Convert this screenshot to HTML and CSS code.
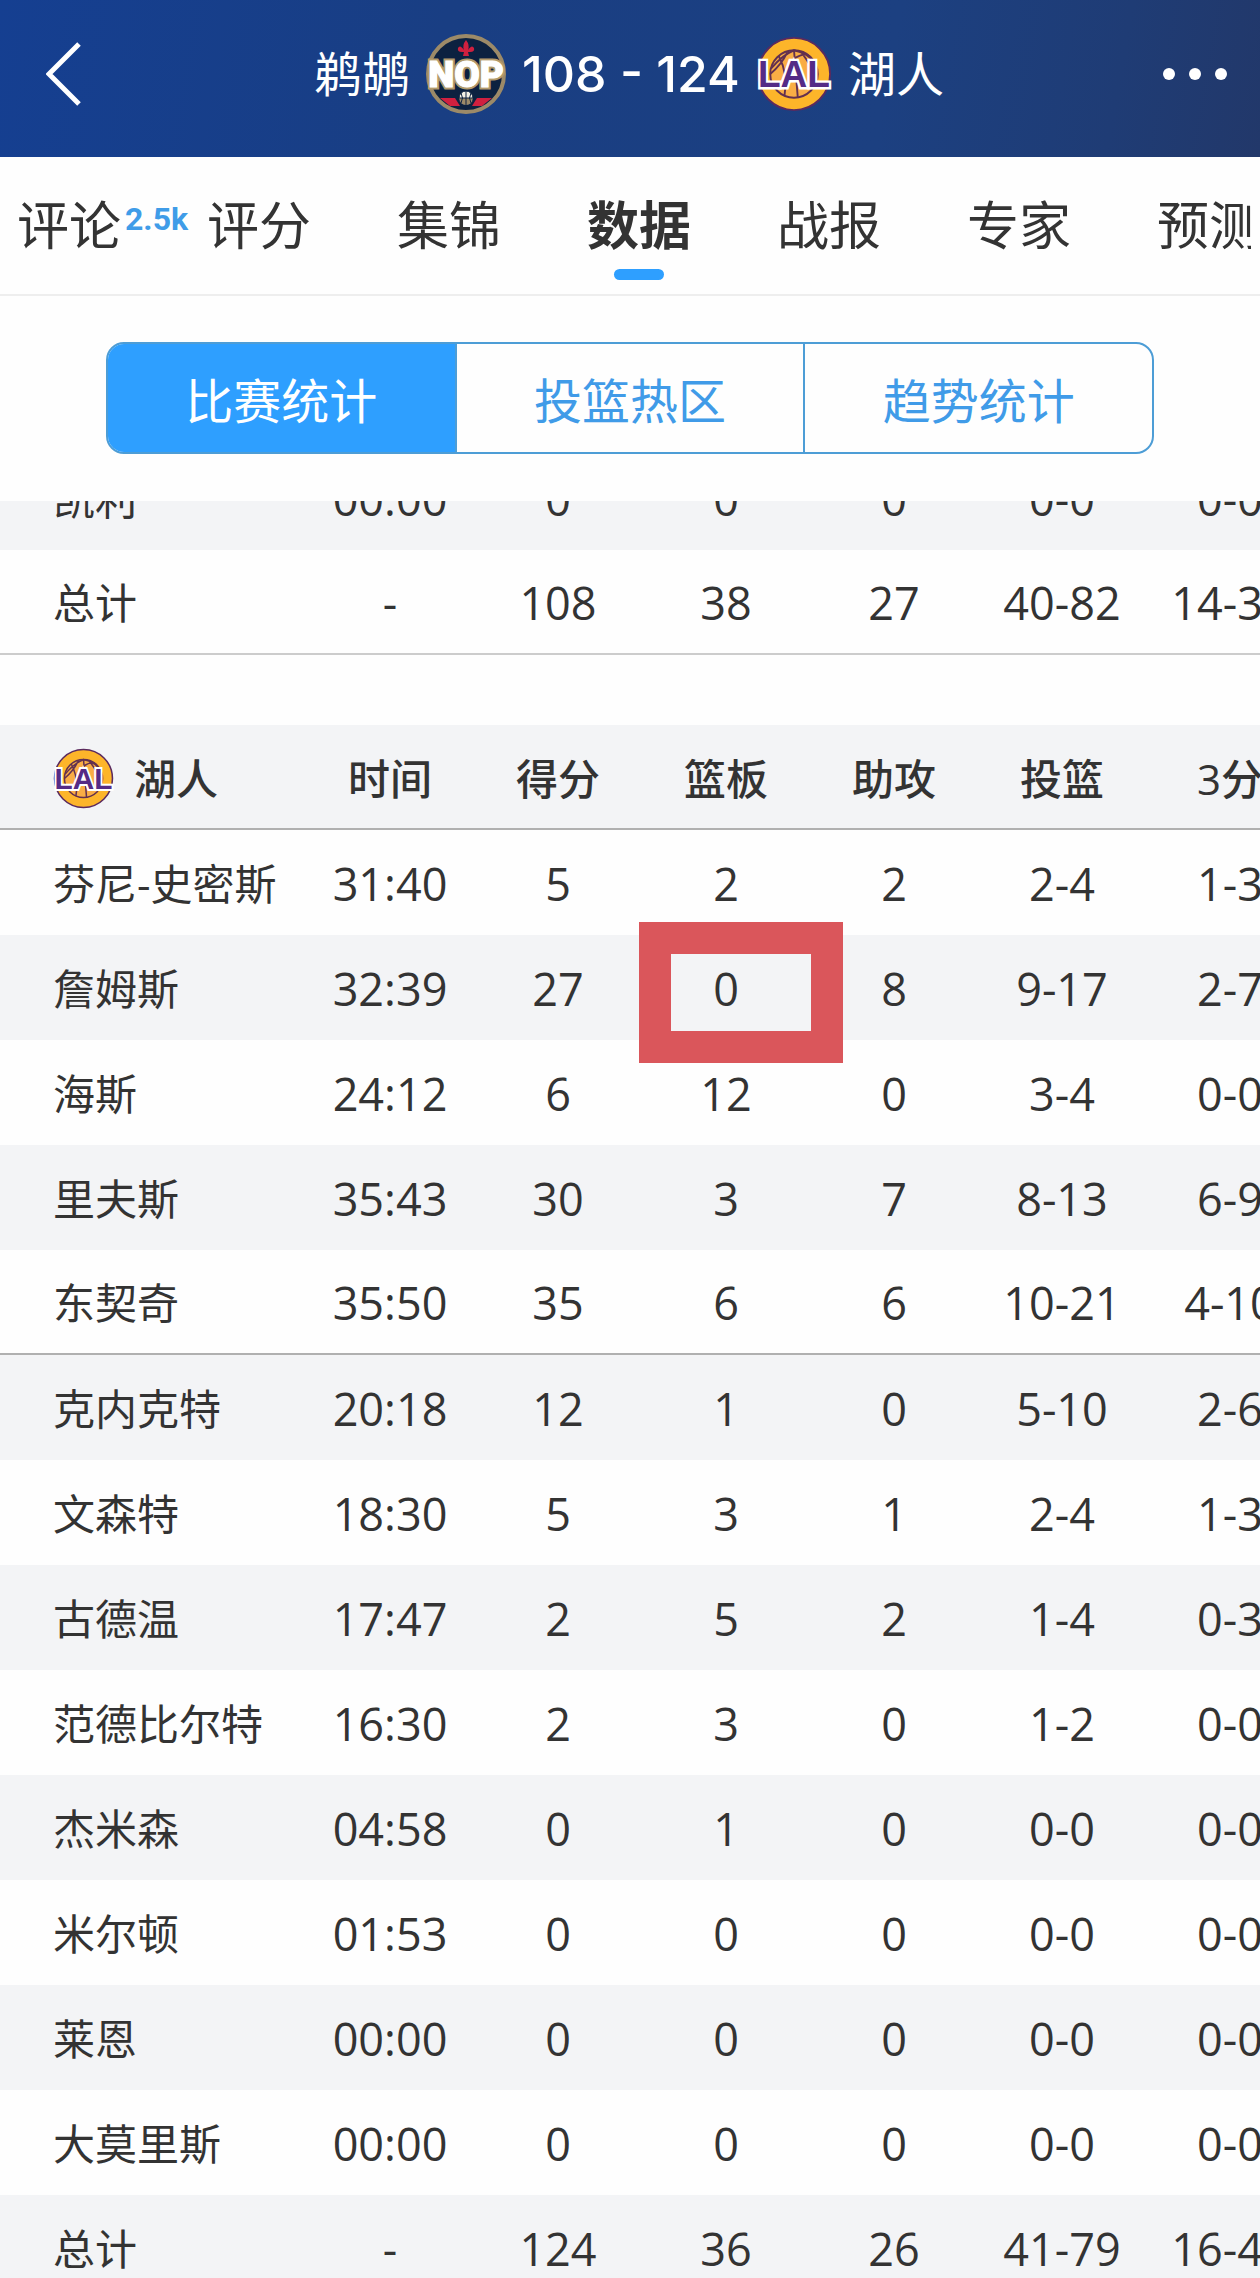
FILE: index.html
```html
<!DOCTYPE html>
<html lang="zh-CN">
<head>
  <meta charset="UTF-8">
  <meta name="viewport" content="width=device-width, initial-scale=1">
  <title>鹈鹕 108 - 124 湖人</title>
  <link rel="stylesheet" href="styles.css">
</head>
<body>
  <!-- Lakers logo, used in the header and in the table -->
  <svg class="defs" aria-hidden="true">
    <symbol id="logo-lal" viewBox="0 0 80 80">
      <circle cx="40" cy="40" r="38" fill="#fdb52a" stroke="#5b2a5e" stroke-width="2"/>
      <circle cx="40" cy="40" r="25" fill="#f9ad45" stroke="#63304f" stroke-width="2"/>
      <path d="M40 15 L44 65 M16 34 Q28 20 40 15 Q54 18 62 28 M24 21 Q34 40 30 63 M33 17 Q27 30 15 40 M47 16 Q60 34 64 44 M40 24 Q52 16 57 22" fill="none" stroke="#63304f" stroke-width="2"/>
      <text x="40" y="54" text-anchor="middle" class="logo-text lal-text">LAL</text>
    </symbol>
  </svg>

  <header class="header">
    <button class="back-button" aria-label="返回">
      <svg width="36" height="64" viewBox="0 0 36 64">
        <path d="M33 2 L3 32 L33 62" fill="none" stroke="#fff" stroke-width="5"/>
      </svg>
    </button>
    <h1 class="score">
      <span class="team">鹈鹕</span>
      <svg class="logo-nop" viewBox="0 0 80 80" aria-hidden="true">
        <circle cx="40" cy="40" r="38" fill="#0c2140" stroke="#9c8a68" stroke-width="4"/>
        <path d="M40 6 Q44 11 42 16 Q46 10 48 14 Q49 18 44 18 L42 18 L43 22 L37 22 L38 18 L36 18 Q31 18 32 14 Q34 10 38 16 Q36 11 40 6 Z" fill="#d0203f"/>
        <path d="M14 64 L29 64 L34 72 L24 72 Z M66 64 L51 64 L46 72 L56 72 Z" fill="#d0203f"/>
        <circle cx="40" cy="64" r="7" fill="#f4f0e6" stroke="#0c2140"/>
        <path d="M33 64 H47 L45 69 Q40 73 35 69 Z" fill="#9c8a68"/>
        <path d="M40 57 V71 M33 64 H47 M35 59 Q38 64 35 69 M45 59 Q42 64 45 69" fill="none" stroke="#0c2140" stroke-width="1"/>
        <text x="40" y="53" text-anchor="middle" class="logo-text nop-shadow">NOP</text>
        <text x="40" y="53" text-anchor="middle" class="logo-text nop-text" aria-hidden="true">NOP</text>
      </svg>
      <span class="points">108 - 124</span>
      <svg class="logo-lal" aria-hidden="true"><use href="#logo-lal"/></svg>
      <span class="team">湖人</span>
    </h1>
    <button class="more-button" aria-label="更多">
      <svg width="66" height="14" viewBox="0 0 66 14" fill="#fff">
        <circle cx="7" cy="7" r="6"/>
        <circle cx="33" cy="7" r="6"/>
        <circle cx="59" cy="7" r="6"/>
      </svg>
    </button>
  </header>

  <nav class="tabs">
    <div class="tab-strip">
      <a href="#" class="tab">评论<span class="badge">2.5k</span></a>
      <a href="#" class="tab">评分</a>
      <a href="#" class="tab">集锦</a>
      <a href="#" class="tab active">数据</a>
      <a href="#" class="tab">战报</a>
      <a href="#" class="tab">专家</a>
      <a href="#" class="tab">预测</a>
    </div>
  </nav>

  <div class="segments">
    <button class="segment active">比赛统计</button>
    <button class="segment">投篮热区</button>
    <button class="segment">趋势统计</button>
  </div>

  <main class="stats">
    <table class="stats-table away">
      <colgroup><col class="name-col"><col span="6"></colgroup>
      <tbody>
        <tr><th scope="row">凯利</th><td>00:00</td><td>0</td><td>0</td><td>0</td><td>0-0</td><td>0-0</td></tr>
        <tr class="line light"><th scope="row">总计</th><td>-</td><td>108</td><td>38</td><td>27</td><td>40-82</td><td>14-36</td></tr>
      </tbody>
    </table>

    <table class="stats-table home">
      <colgroup><col class="name-col"><col span="6"></colgroup>
      <thead>
        <tr class="line">
          <th scope="col"><div class="team-name"><svg class="logo-small" aria-hidden="true"><use href="#logo-lal"/></svg>湖人</div></th>
          <th scope="col">时间</th>
          <th scope="col">得分</th>
          <th scope="col">篮板</th>
          <th scope="col">助攻</th>
          <th scope="col">投篮</th>
          <th scope="col">3分</th>
        </tr>
      </thead>
      <tbody>
        <tr><th scope="row">芬尼-史密斯</th><td>31:40</td><td>5</td><td>2</td><td>2</td><td>2-4</td><td>1-3</td></tr>
        <tr><th scope="row">詹姆斯</th><td>32:39</td><td>27</td><td class="marked">0</td><td>8</td><td>9-17</td><td>2-7</td></tr>
        <tr><th scope="row">海斯</th><td>24:12</td><td>6</td><td>12</td><td>0</td><td>3-4</td><td>0-0</td></tr>
        <tr><th scope="row">里夫斯</th><td>35:43</td><td>30</td><td>3</td><td>7</td><td>8-13</td><td>6-9</td></tr>
        <tr class="line"><th scope="row">东契奇</th><td>35:50</td><td>35</td><td>6</td><td>6</td><td>10-21</td><td>4-10</td></tr>
        <tr><th scope="row">克内克特</th><td>20:18</td><td>12</td><td>1</td><td>0</td><td>5-10</td><td>2-6</td></tr>
        <tr><th scope="row">文森特</th><td>18:30</td><td>5</td><td>3</td><td>1</td><td>2-4</td><td>1-3</td></tr>
        <tr><th scope="row">古德温</th><td>17:47</td><td>2</td><td>5</td><td>2</td><td>1-4</td><td>0-3</td></tr>
        <tr><th scope="row">范德比尔特</th><td>16:30</td><td>2</td><td>3</td><td>0</td><td>1-2</td><td>0-0</td></tr>
        <tr><th scope="row">杰米森</th><td>04:58</td><td>0</td><td>1</td><td>0</td><td>0-0</td><td>0-0</td></tr>
        <tr><th scope="row">米尔顿</th><td>01:53</td><td>0</td><td>0</td><td>0</td><td>0-0</td><td>0-0</td></tr>
        <tr><th scope="row">莱恩</th><td>00:00</td><td>0</td><td>0</td><td>0</td><td>0-0</td><td>0-0</td></tr>
        <tr><th scope="row">大莫里斯</th><td>00:00</td><td>0</td><td>0</td><td>0</td><td>0-0</td><td>0-0</td></tr>
        <tr><th scope="row">总计</th><td>-</td><td>124</td><td>36</td><td>26</td><td>41-79</td><td>16-41</td></tr>
      </tbody>
    </table>
  </main>
</body>
</html>
```
FILE: styles.css
```css
html, body {
  height: 100%;
  margin: 0;
  padding: 0;
}

body {
  display: flex;
  flex-direction: column;
  overflow: hidden;
  background-color: #fefefe;
  color: #333;
  font-family: "Open Sans", "Noto Sans CJK SC", sans-serif;
}

button {
  padding: 0;
  border: none;
  background: none;
  font-family: inherit;
  cursor: pointer;
}

svg {
  display: block;
}

.defs {
  position: absolute;
  width: 0;
  height: 0;
}

.header {
  flex: none;
  display: flex;
  align-items: center;
  justify-content: space-between;
  box-sizing: border-box;
  height: 157px;
  padding: 0 32px 10px 46px;
  background: linear-gradient(100deg, #153f91 0%, #193e83 35%, #1c4081 70%, #1f3c75 88%, #22386a 100%);
  color: #fff;
}

.back-button {
  flex: 0 0 50px;
}

.more-button {
  flex: 0 0 66px;
}

.score {
  display: flex;
  align-items: center;
  gap: 16px;
  margin: 0;
  font-size: 48px;
  font-weight: 400;
  line-height: 72px;
}

.points {
  font-family: Inter, sans-serif;
  font-size: 50px;
  font-weight: 500;
}

.logo-nop {
  width: 80px;
  height: 80px;
}

.header .logo-lal {
  width: 76px;
  height: 76px;
}

.logo-text {
  font-family: "Liberation Sans", sans-serif;
  font-weight: 700;
  paint-order: stroke;
}

.lal-text {
  font-size: 39px;
  fill: #542b86;
  stroke: #fff;
  stroke-width: 5px;
}

.nop-text,
.nop-shadow {
  font-family: Roboto, sans-serif;
  font-weight: 900;
  font-size: 37px;
  fill: #fff;
  stroke: #fff;
  stroke-width: 1px;
}

.nop-shadow {
  stroke: #b39b6c;
  stroke-width: 5px;
}

.tabs {
  flex: none;
  border-bottom: 2px solid #eee;
}

.tab-strip {
  display: flex;
  gap: 86px;
  height: 137px;
  margin-right: 9px;
  padding-left: 17px;
  overflow: hidden;
}

.tab {
  flex: none;
  position: relative;
  color: #333;
  font-size: 52px;
  line-height: 136px;
  text-decoration: none;
}

.tab.active {
  font-weight: 700;
}

.tab.active::after {
  content: "";
  position: absolute;
  left: 50%;
  bottom: 14px;
  width: 50px;
  height: 11px;
  margin-left: -25px;
  border-radius: 6px;
  background-color: #2e9fff;
}

.badge {
  position: absolute;
  left: 108px;
  top: 42px;
  color: #3f9ce8;
  font-family: Roboto, sans-serif;
  font-size: 32px;
  font-weight: 700;
  line-height: 40px;
}

.segments {
  flex: none;
  display: flex;
  box-sizing: border-box;
  height: 112px;
  margin: 46px 106px 47px;
  border: 2px solid #4d9dd6;
  border-radius: 18px;
  overflow: hidden;
}

.segment {
  flex: 1;
  color: #409be8;
  font-size: 48px;
}

.segment + .segment {
  border-left: 2px solid #4d9dd6;
}

.segment.active {
  background-color: #2e9fff;
  color: #fff;
}

.stats {
  flex: 1;
  min-height: 0;
  overflow: hidden;
}

.stats-table {
  width: 1314px;
  table-layout: fixed;
  border-collapse: separate;
  border-spacing: 0;
}

.name-col {
  width: 306px;
}

/* the list is scrolled, the first row is half hidden */
.away {
  margin-top: -56px;
}

.home {
  margin-top: 70px;
}

.stats-table th,
.stats-table td {
  box-sizing: border-box;
  height: 105px;
  padding: 3px 0 0;
  font-size: 45px;
  font-weight: 400;
  line-height: 60px;
  text-align: center;
  white-space: nowrap;
}

.stats-table th {
  font-size: 42px;
}

.stats-table th:first-child {
  padding-left: 53px;
  text-align: left;
}

.stats-table thead th {
  padding-top: 4px;
  font-weight: 500;
}

.away tr:nth-child(odd),
.home thead tr,
.home tbody tr:nth-child(even) {
  background-color: #f3f4f6;
}

.line th,
.line td {
  border-bottom: 2px solid #b0b0b0;
}

.light th,
.light td {
  border-bottom-color: #ccc;
}

.team-name {
  display: flex;
  align-items: center;
  gap: 20px;
}

.logo-small {
  width: 61px;
  height: 61px;
}

.marked {
  position: relative;
}

/* red frame round the rebounds cell */
.marked::after {
  content: "";
  position: absolute;
  left: -3px;
  top: -13px;
  box-sizing: border-box;
  width: 204px;
  height: 141px;
  border: 32px solid #da565b;
}
```
